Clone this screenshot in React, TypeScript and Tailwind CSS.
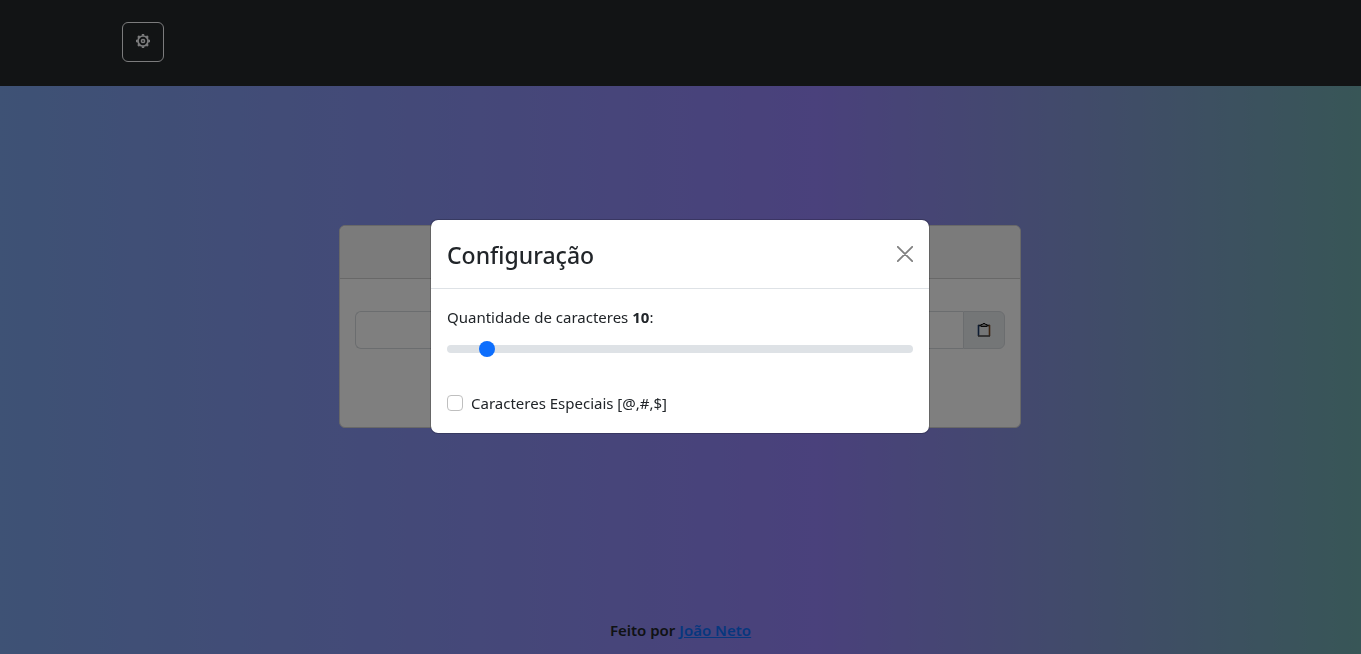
import { useState } from "react";

function GearIcon() {
  return (
    <svg width="16" height="16" viewBox="0 0 16 16" fill="none" stroke="currentColor" aria-hidden="true">
      <circle cx="8" cy="8" r="5" strokeWidth="1.700" />
      <circle cx="8" cy="8" r="1.600" strokeWidth="1.500" />
      <path
        d="M8 1v1.800M8 13.200v1.800M1 8h1.800M13.200 8h1.800M3.050 3.050l1.300 1.300M11.650 11.650l1.300 1.300M3.050 12.950l1.300-1.300M11.650 4.350l1.300-1.300"
        strokeWidth="2.400"
      />
    </svg>
  );
}

function ClipboardIcon() {
  return (
    <svg width="14" height="16" viewBox="0 0 14 16" fill="none" aria-hidden="true">
      <path d="M1 3.500h12" stroke="#15181b" strokeWidth="1.600" />
      <path d="M1.500 3v11" stroke="#1c3a66" strokeWidth="1.600" />
      <path d="M12.500 3v11" stroke="#7a4a22" strokeWidth="1.600" />
      <path d="M1 14h12" stroke="#4a4a4a" strokeWidth="1.600" />
      <path d="M4 4.500v-2h1.500l.5-1h2l.5 1h1.500v2z" fill="#999" stroke="#111" strokeWidth="1" />
    </svg>
  );
}

function CloseIcon() {
  return (
    <svg width="16" height="16" viewBox="0 0 16 16" fill="none" stroke="currentColor" aria-hidden="true">
      <path d="M.800.800l14.400 14.400M15.200.800L.800 15.200" strokeWidth="1.800" strokeLinecap="round" />
    </svg>
  );
}

export default function App() {
  const [length, setLength] = useState(10);
  const [special, setSpecial] = useState(false);

  return (
    <div className="flex min-h-screen flex-col bg-[linear-gradient(90deg,#7ca4ea_0%,#9482f8_60%,#70acae_100%)] font-['Noto_Sans','Open_Sans',sans-serif] text-[15px] text-[#212529]">
      <header className="bg-[#24282b] pt-[22px] pb-6">
        <div className="mx-auto max-w-[1141px] px-3">
          <button
            type="button"
            aria-label="Configuração"
            className="flex h-10 w-[42px] items-center justify-center rounded-md border border-[#f8f9fa] pb-0.5 text-[#f8f9fa]"
          >
            <GearIcon />
          </button>
        </div>
      </header>

      <main className="flex flex-1 items-center justify-center pr-[13px] pl-3">
        <section className="w-full max-w-[682px] rounded-md border border-[#d0d0d0] bg-white">
          <div className="h-[53px] rounded-t-md border-b border-[#d0d0d0] bg-[#f7f7f7]" />
          <div className="px-[15px] pt-8 pb-[78px]">
            <div className="flex h-[38px]">
              <input
                type="text"
                readOnly
                aria-label="Senha"
                className="min-w-0 flex-1 rounded-l-md border border-r-0 border-[#d6dade] bg-white px-3"
              />
              <button
                type="button"
                aria-label="Copiar"
                className="flex w-[42px] items-center justify-center rounded-r-md border border-[#d6dade] bg-[#e9ecef]"
              >
                <ClipboardIcon />
              </button>
            </div>
          </div>
        </section>
      </main>

      <footer className="pt-[51px] pb-3 text-center leading-6 font-semibold">
        Feito por{" "}
        <a href="#" className="text-[#0d6efd] underline">
          João Neto
        </a>
      </footer>

      <div className="fixed inset-0 flex items-center justify-center bg-black/50 pt-4 pr-[17px] pb-[18px] pl-4">
        <div
          role="dialog"
          aria-modal="true"
          aria-labelledby="config-title"
          className="w-full max-w-[500px] rounded-lg border border-black/20 bg-white bg-clip-padding"
        >
          <div className="flex items-center justify-between border-b border-[#dee2e6] px-4 pt-[17px] pb-[15px]">
            <h1 id="config-title" className="text-[23px] leading-9 font-medium">
              Configuração
            </h1>
            <button type="button" aria-label="Fechar" className="pb-0.5 text-[#808080]">
              <CloseIcon />
            </button>
          </div>
          <div className="px-4 pt-4 pb-[18px]">
            <label htmlFor="length" className="mb-2 block leading-6">
              Quantidade de caracteres <strong className="font-bold">{length}</strong>:
            </label>
            <input
              id="length"
              type="range"
              min={1}
              max={128}
              value={length}
              onChange={(e) => setLength(Number(e.target.value))}
              className="block h-6 w-full appearance-none bg-transparent [&::-webkit-slider-runnable-track]:h-2 [&::-webkit-slider-runnable-track]:rounded-full [&::-webkit-slider-runnable-track]:bg-[#dee2e6] [&::-webkit-slider-thumb]:-mt-1 [&::-webkit-slider-thumb]:size-4 [&::-webkit-slider-thumb]:appearance-none [&::-webkit-slider-thumb]:rounded-full [&::-webkit-slider-thumb]:bg-[#0d6efd]"
            />
            <div className="mt-[30px] flex items-center gap-2">
              <input
                id="special"
                type="checkbox"
                checked={special}
                onChange={(e) => setSpecial(e.target.checked)}
                className="size-4 appearance-none rounded border border-[#bfbfbf] bg-white checked:border-[#0d6efd] checked:bg-[#0d6efd]"
              />
              <label htmlFor="special" className="leading-6">
                Caracteres Especiais [@,#,$]
              </label>
            </div>
          </div>
        </div>
      </div>
    </div>
  );
}
